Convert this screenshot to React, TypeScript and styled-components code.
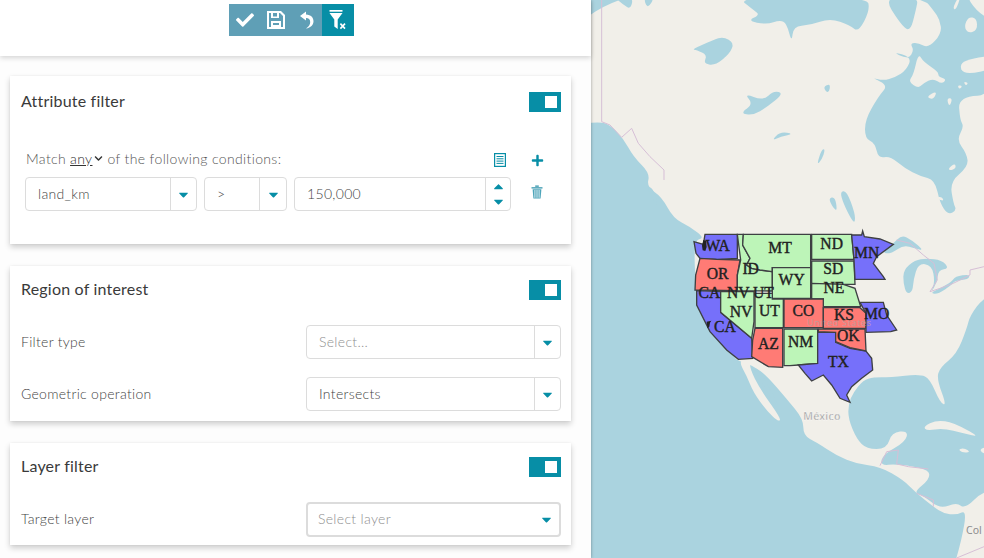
import React from "react";
import styled, { createGlobalStyle } from "styled-components";
import { FaCheck, FaPlus, FaChevronDown, FaCaretDown, FaCaretUp } from "react-icons/fa";

const teal = "#078ea6";
const WATER = "#aad3df";
const LAND = "#f1efe9";

const Global = createGlobalStyle`
  html, body { margin: 0; padding: 0; height: 100%; background: #fff; overflow: hidden; }
  body { font-family: "Lato", "Open Sans", sans-serif; color: #555; }
`;
const Page = styled.div`display: flex; width: 984px; height: 558px; overflow: hidden;`;
const Panel = styled.div`
  width: 591px; flex: none; background: #fdfdfd; display: flex; flex-direction: column;
  position: relative; z-index: 2; box-shadow: 0 0 3px rgba(0,0,0,.35);
`;
const TopBar = styled.div`
  height: 56px; flex: none; box-sizing: border-box; padding: 4px 0 0 229px; background: #fff;
  box-shadow: 0 2px 5px rgba(0,0,0,.16);
`;
const ButtonGroup = styled.div`display: inline-flex; height: 32px;`;
const ToolButton = styled.div<{ $active?: boolean }>`
  width: ${p => (p.$active ? 32 : 31)}px; height: 32px; display: flex; align-items: center; justify-content: center;
  color: #fff; background: ${p => (p.$active ? teal : "#5f9fb6")};
`;
const Cards = styled.div`display: flex; flex-direction: column; gap: 22px; padding: 20px 20px 0 10px;`;
const Card = styled.section<{ $top: number; $bottom: number }>`
  background: #fff; box-shadow: 0 3px 6px rgba(0,0,0,.2), 0 0 2px rgba(0,0,0,.05);
  padding: ${p => p.$top}px 10px ${p => p.$bottom}px 11px;
`;
const CardHead = styled.div`display: flex; align-items: center; justify-content: space-between; height: 20px;`;
const Title = styled.h3`margin: -4px 0 0; font-size: 16px; font-weight: 400; color: #3a3a3a; letter-spacing: .2px; font-family: "Lato", sans-serif;`;
const Toggle = styled.div`
  width: 32px; height: 20px; box-sizing: border-box; background: ${teal}; padding: 4px; display: flex; justify-content: flex-end;
  &::after { content: ""; width: 12px; height: 12px; background: #fff; }
`;
const MatchRow = styled.div`
  display: flex; align-items: center; height: 20px; margin: 38px 0 7px 5px; font-size: 14px; font-weight: 300; color: #555; letter-spacing: .36px;
`;
const MatchText = styled.span`margin-top: -3px; display: flex; align-items: center; white-space: pre;`;
const Any = styled.span`color: #333; text-decoration: underline; margin: 0 2px 0 4px;`;
const Chevron = styled.span`color: #333; display: flex; margin-right: 4px;`;
const Accent = styled.span`color: ${teal}; display: flex;`;
const MatchIcons = styled.div`
  margin-left: auto; width: 50px; display: flex; justify-content: space-between; align-items: center; margin-right: 17px;
`;
const CondRow = styled.div`display: flex; gap: 7px; margin-left: 4px; align-items: center;`;
const Select = styled.div<{ $w?: number; $flat?: boolean }>`
  ${p => (p.$w ? `width:${p.$w}px; flex:none;` : "flex:1;")}
  height: ${p => (p.$flat ? 35 : 34)}px; box-sizing: border-box; display: flex; align-items: stretch; background: #fff;
  border: ${p => (p.$flat ? 2 : 1)}px solid #dcdcdc; border-radius: 4px; font-size: 14px; font-weight: 300;
`;
const Value = styled.div<{ $muted?: boolean; $pad?: number }>`
  flex: 1; display: flex; align-items: center; padding: 0 0 2px ${p => p.$pad ?? 12}px;
  color: ${p => (p.$muted ? "#8f8f8f" : "#444")}; letter-spacing: .32px;
`;
const Caret = styled.div<{ $line?: boolean; $w: number }>`
  width: ${p => p.$w}px; flex: none; display: flex; flex-direction: column; align-items: center; justify-content: center; color: ${teal};
  ${p => (p.$line ? "border-left: 1px solid #dcdcdc;" : "")}
`;
const TrashSlot = styled.div`margin-left: 13px; display: flex; align-self: flex-start; padding-top: 8px;`;
const Field = styled.div<{ $top: number }>`display: flex; align-items: center; margin-top: ${p => p.$top}px;`;
const Label = styled.div`width: 285px; flex: none; font-size: 14px; font-weight: 300; color: #444; letter-spacing: .3px; margin-top: -2px;`;
const MapArea = styled.div`flex: 1; background: ${WATER}; overflow: hidden;`;
const MapSvg = styled.svg`display: block;`;

/* turn a point list into a rounded outline, so coasts do not look like polygons */
const smooth = (s: string) => {
  const p = s.trim().split(/\s+/).map(c => c.split(",").map(Number));
  const mid = (a: number[], b: number[]) => `${(a[0] + b[0]) / 2},${(a[1] + b[1]) / 2}`;
  let d = `M${mid(p[p.length - 1], p[0])}`;
  p.forEach((pt, i) => { d += `Q${pt[0]},${pt[1]} ${mid(pt, p[(i + 1) % p.length])}`; });
  return d + "Z";
};

const land =
  "-60,-60 1260,-60 1260,860 1182,891 1140,947 1130,987 1100,1062 1050,1102 1040,1137 1070,1217 1050,1207 1020,1137 990,1122 900,1132 850,1132 820,1140 790,1177 775,1212 775,1257 800,1317 830,1347 890,1347 905,1297 955,1292 945,1327 880,1362 870,1397 920,1392 1015,1407 1020,1437 970,1477 1000,1487 1050,1527 1100,1507 1125,1527 1182,1470 1260,1470 1260,1740 1080,1740 1115,1620 1130,1530 1100,1545 1060,1540 1030,1520 980,1480 940,1440 870,1400 800,1392 740,1367 680,1327 640,1307 640,1257 590,1197 530,1127 490,1097 445,1082 430,1070 320,900 310,720 345,715 300,680 250,655 215,590 170,560 180,520 130,470 100,415 60,375 30,365 -60,375";
const baja = "445,1082 480,1077 480,1107 510,1167 574,1257 565,1265 530,1232 490,1177 470,1127";
const gulfCal = "488,1100 510,1112 575,1232 555,1215";
const caribbean = [
  "1000,1280 1040,1260 1090,1268 1172,1312 1120,1300 1060,1285 1010,1292",
  "1105,1347 1125,1345 1142,1357 1115,1358",
  "1170,1345 1200,1340 1200,1362 1175,1360",
];
const coastal = "170,562 188,562 206,622 190,600";

/* lakes west of the bay, in the crop at (590,0) */
const lakesWest = [
  "305,148 370,120 400,110 432,128 420,160 375,197 340,190 352,165 320,150",
  "450,340 490,312 462,280 520,302 550,272 582,280 530,322 490,346",
  "545,422 570,395 612,402 572,410",
  "680,495 695,448 706,448 695,480",
  "698,262 722,250 716,282",
  "750,575 770,572 795,640 795,668 785,660 760,610",
  "715,595 735,590 742,632 730,625",
  "72,-10 130,-10 122,28 100,14",
  "160,-10 195,-10 172,28",
  "440,-10 490,30 510,45 472,62 530,74 570,60 590,70 605,128 610,80 660,75 720,55 780,75 805,97 840,30 830,-10",
  "880,-10 930,70 960,97 978,30 985,-10",
];
/* the bay, in the crop at (840,0) */
const bay =
  "75,360 115,290 145,255 92,232 130,242 165,232 200,210 215,170 155,155 205,178 222,150 210,130 235,128 265,145 305,100 300,60 280,30 238,-20 470,-20 470,285 355,290 360,360 372,380 350,420 380,460 385,500 330,545 340,610 350,630 325,645 300,610 285,540 240,528 195,505 150,468 115,475 105,430 75,415";
const bayLand = [
  "235,160 250,185 295,215 295,230 320,238 305,252 280,235 250,250 235,265 205,245 220,225",
  "372,80 385,50 410,55 412,90 385,100",
  "358,190 400,175 470,165 470,205 370,225",
  "425,140 470,130 470,165",
  "258,290 292,272 280,300",
  "320,295 338,295 328,322",
  "352,255 368,258 358,268",
  "370,245 385,248 378,258",
  "375,-20 470,-20 470,70 410,35",
  "338,25 355,-10 362,-10 348,30",
];
/* the lakes to the south of the bay, in the crop at (860,220) */
const lakesSouth = [
  "65,100 100,70 125,45 155,60 192,92 165,85 130,75 95,100",
  "200,115 245,120 268,145 235,150 232,185 212,220 225,185 215,135 175,130 160,180 158,215 140,222 130,190 130,150 165,120",
  "210,220 240,205 275,185 285,170 330,162 325,178 285,182 275,195 235,222",
];
const bordersWest = [
  "35,-5 35,365 60,375 95,412 125,385 145,430 180,470 222,510 222,540",
  "870,1397 890,1355 925,1350 920,1392 955,1400 1015,1407",
  "980,1480 1030,1500 1030,1520",
  "1100,1674 1182,1640",
];
const borderLakes = "110,60 150,70 190,105 222,130 232,180 210,215 240,205 280,190 330,165 330,150 372,140";

const G = "#bdf5b8", R = "#ff7b75", B = "#7670fa";
const states: [string, string][] = [
  [B, "75,28 172,28 172,100 110,103 60,100 48,85 42,50 70,58"],
  [R, "60,100 110,103 180,105 172,150 172,197 45,195 47,150"],
  [G, "172,28 190,28 188,60 210,100 200,120 215,130 240,135 277,140 277,198 172,197 172,150 182,105"],
  [G, "190,28 392,28 392,128 277,128 277,140 240,135 215,130 200,120 210,100 188,60"],
  [G, "277,128 392,128 392,220 277,220"],
  [G, "395,28 515,28 522,103 395,103"],
  [G, "395,108 522,108 525,178 490,178 395,175"],
  [G, "395,175 490,178 525,190 542,245 430,245 430,222 395,222"],
  [B, "515,30 545,30 548,18 553,35 600,42 640,58 590,95 580,115 610,155 615,163 525,163 522,105"],
  [B, "50,197 122,200 122,262 215,340 218,400 175,403 140,375 90,320 50,240"],
  [G, "122,200 222,200 222,290 215,340 122,262"],
  [G, "225,205 277,205 277,222 310,222 310,308 225,308"],
  [R, "312,222 430,222 430,308 312,308"],
  [R, "225,310 308,310 308,427 265,425 215,395 218,345"],
  [G, "312,312 413,312 413,415 355,420 330,422 312,422"],
  [R, "430,248 540,248 558,265 558,310 430,310"],
  [B, "355,420 413,415 413,322 467,322 467,352 510,370 558,378 575,400 578,435 545,460 515,485 500,510 510,532 480,520 455,480 430,450 395,468 375,445"],
  [R, "415,312 555,312 558,378 510,368 467,350 467,322 415,320"],
  [B, "540,232 610,232 620,270 650,315 632,320 558,322 558,265"],
];
const labels: [string, number, number][] = [
  ["WA", 113, 62], ["OR", 113, 147], ["ID", 212, 132], ["MT", 300, 68], ["ND", 455, 58], ["SD", 460, 132],
  ["WY", 335, 165], ["NE", 462, 190], ["MN", 560, 85], ["CA", 88, 205], ["NV", 175, 205], ["UT", 250, 205],
  ["NV", 183, 262], ["UT", 268, 258], ["CO", 370, 258], ["KS", 492, 270], ["MO", 590, 268], ["CA", 135, 305],
  ["AZ", 265, 358], ["NM", 362, 352], ["OK", 505, 332], ["TX", 475, 412],
];

const SaveIcon = () => (
  <svg width="18" height="18" viewBox="0 0 18 18">
    <path fillRule="evenodd" d="M0 0h14l4 4v14H0ZM2 2v14h14V5l-3-3h-1v5H4V2Zm4 0v3.5h4V2ZM4 10h10v6H4Zm2 2v2h6v-2Z" fill="#fff" />
  </svg>
);
const UndoIcon = () => (
  <svg width="14" height="18" viewBox="0 0 14 18">
    <path d="M0 5 6 .5V3.4C11 3.6 13.5 6.5 13.5 10.2 13.5 13.8 10.8 16.6 6 17.5 9 15.8 10.2 13.4 10.2 11 10.2 8.4 8.6 7.2 6 7V9.6Z" fill="#fff" />
  </svg>
);
const FilterXIcon = () => (
  <svg width="20" height="20" viewBox="0 0 20 20">
    <path d="M1.5 0h13v1.7h-13z" fill="#fff" />
    <path d="M1.5 3h13l-4.8 6.4V19L6.3 16.4v-7Z" fill="#fff" />
    <path d="M12.4 13.6l4.6 5M17 13.6l-4.6 5" stroke="#fff" strokeWidth="1.6" />
  </svg>
);
const ListIcon = () => (
  <svg width="12" height="14" viewBox="0 0 12 14">
    <rect x=".6" y=".6" width="10.8" height="12.8" fill="none" stroke={teal} strokeWidth="1.2" />
    <path d="M2.5 3.5h7M2.5 5.8h7M2.5 8.1h7M2.5 10.4h7" stroke={teal} strokeWidth="1" />
  </svg>
);
const TrashIcon = () => (
  <svg width="12" height="14" viewBox="0 0 12 14">
    <path d="M4.2 1.2h3.6M.5 2.8h11" stroke="#2f93ab" strokeWidth="1.3" />
    <path d="M1.6 4.2h8.8L9.6 13.6H2.4Z" fill="#4ea5ba" />
    <path d="M3.9 5v7.8M6 5v7.8M8.1 5v7.8" stroke="#fff" strokeWidth=".8" />
  </svg>
);
const Pick = ({ w }: { w: number }) => (
  <Caret $line $w={w}><FaCaretDown size={15} /></Caret>
);

export default function App() {
  return (
    <Page>
      <Global />
      <Panel>
        <TopBar>
          <ButtonGroup>
            <ToolButton><FaCheck size={18} /></ToolButton>
            <ToolButton><SaveIcon /></ToolButton>
            <ToolButton><UndoIcon /></ToolButton>
            <ToolButton $active><FilterXIcon /></ToolButton>
          </ButtonGroup>
        </TopBar>
        <Cards>
          <Card $top={16} $bottom={33}>
            <CardHead><Title>Attribute filter</Title><Toggle /></CardHead>
            <MatchRow>
              <MatchText>Match<Any>any</Any><Chevron><FaChevronDown size={9} /></Chevron>of the following conditions:</MatchText>
              <MatchIcons><ListIcon /><Accent><FaPlus size={13} /></Accent></MatchIcons>
            </MatchRow>
            <CondRow>
              <Select $w={172}><Value>land_km</Value><Pick w={25} /></Select>
              <Select $w={83}><Value>&gt;</Value><Pick w={26} /></Select>
              <Select $w={217}>
                <Value>150,000</Value>
                <Caret $line $w={24}><FaCaretUp size={15} /><FaCaretDown size={15} /></Caret>
              </Select>
              <TrashSlot><TrashIcon /></TrashSlot>
            </CondRow>
          </Card>
          <Card $top={14} $bottom={10}>
            <CardHead><Title>Region of interest</Title><Toggle /></CardHead>
            <Field $top={25}>
              <Label>Filter type</Label>
              <Select><Value $muted>Select...</Value><Pick w={25} /></Select>
            </Field>
            <Field $top={18}>
              <Label>Geometric operation</Label>
              <Select><Value>Intersects</Value><Pick w={25} /></Select>
            </Field>
          </Card>
          <Card $top={14} $bottom={8}>
            <CardHead><Title>Layer filter</Title><Toggle /></CardHead>
            <Field $top={25}>
              <Label>Target layer</Label>
              <Select $flat><Value $muted $pad={10}>Select layer</Value><Caret $w={26}><FaCaretDown size={15} /></Caret></Select>
            </Field>
          </Card>
        </Cards>
      </Panel>
      <MapArea>
        <MapSvg width="393" height="558" viewBox="0 0 393 558">
          <g transform="translate(-1 0) scale(.33333)">
            <path d={smooth(land)} fill={LAND} />
            <path d={smooth(baja)} fill={LAND} />
            <path d={smooth(gulfCal)} fill={WATER} />
            <path d={smooth(coastal)} fill={WATER} />
            {caribbean.map((p, i) => <path key={i} d={smooth(p)} fill={LAND} />)}
            {lakesWest.map((p, i) => <path key={i} d={smooth(p)} fill={WATER} />)}
            {bordersWest.map((p, i) => <polyline key={i} points={p} fill="none" stroke="#d6bfd6" strokeWidth="3" />)}
          </g>
          <g transform="translate(249 0) scale(.33333)">
            <path d={smooth(bay)} fill={WATER} />
            {bayLand.map((p, i) => <path key={i} d={smooth(p)} fill={LAND} />)}
            <path d={smooth("325,505 345,490 348,505 330,512")} fill={LAND} />
            <path d={smooth("290,592 305,590 312,602 298,600")} fill={LAND} />
          </g>
          <g transform="translate(269 220) scale(.33333)">
            {lakesSouth.map((p, i) => <path key={i} d={smooth(p)} fill={WATER} />)}
            <polyline points={borderLakes} fill="none" stroke="#d6bfd6" strokeWidth="3" />
          </g>
          <g transform="translate(89 225) scale(.33333)">
            {states.map(([c, p], i) => <polygon key={i} points={p} fill={c} stroke="#3e4043" strokeWidth="4" />)}
            <text x="478" y="302" textAnchor="middle" fontFamily="Open Sans, sans-serif" fontSize="27" letterSpacing="2" fill="#c49a9a">United States</text>
            <path d="M70 45l8 3 2 18-4 12-8-2-2-14z M80 290l14-3-4 6-2 12-6 5-1-12z" fill="#222" />
            {labels.map(([t, x, y], i) => (
              <text key={i} x={x} y={y + 15} textAnchor="middle" fontFamily="Liberation Serif, serif" fontSize="47" fill="#222" stroke="#222" strokeWidth="1.2">{t}</text>
            ))}
          </g>
          <text x="231" y="420" textAnchor="middle" fontFamily="Noto Sans, sans-serif" fontSize="10.5" fontWeight="500" letterSpacing=".3" fill="#8d8d8d" stroke="#fff" strokeWidth=".3">México</text>
          <text x="375" y="534" fontFamily="Noto Sans, sans-serif" fontSize="10.5" fill="#8d8d8d">Col</text>
        </MapSvg>
      </MapArea>
    </Page>
  );
}
